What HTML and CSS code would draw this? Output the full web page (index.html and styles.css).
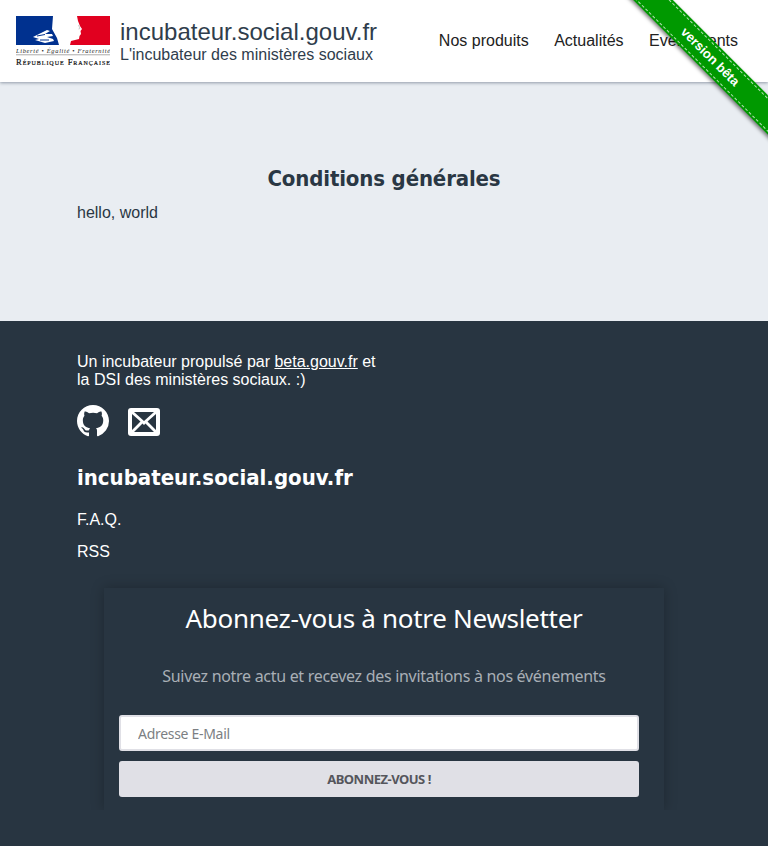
FILE: index.html
```html
<!DOCTYPE html>
<html lang="fr">
<head>
<meta charset="utf-8">
<title>Conditions générales - incubateur.social.gouv.fr</title>
<link rel="stylesheet" href="styles.css">
</head>
<body>
<header class="site-header">
  <a class="brand" href="#">
    <svg class="logo" viewBox="0 0 94 50" width="94" height="50" aria-label="République française">
      <rect x="0" y="0" width="45" height="29" fill="#00318f"/>
      <rect x="52" y="0" width="42" height="29" fill="#e1001f"/>
      <path d="M37 0H61L62 5 64 10 66 13 64.500 15 65 18 63.500 20 63 23 59 24 55 25 54 29H43L41 22 36 13Z" fill="#fff"/>
      <path d="M62.500 9l1.500 3.500-1.500.5" fill="none" stroke="#bdbdbd" stroke-width=".8"/>
      <path d="M17 21l8-4 6-3 3 1-5 3 7 0 1 2-6 1 6 2 1 2-9 2-10-3 4-1Z" fill="#fff"/>
      <path d="M21 20l8-1.500M24 24l9 0" stroke="#00318f" stroke-width="1" fill="none"/>
      <text class="logo-motto" x="47" y="36.500" text-anchor="middle" textLength="94">Liberté • Égalité • Fraternité</text>
      <rect x="0" y="38.500" width="94" height=".7" fill="#888"/>
      <text class="logo-rep" x="47" y="48.500" text-anchor="middle" textLength="94">République Française</text>
    </svg>
    <span class="brand-text">
      <span class="brand-title">incubateur.social.gouv.fr</span>
      <span class="brand-sub">L'incubateur des ministères sociaux</span>
    </span>
  </a>
  <nav class="nav">
    <a href="#">Nos produits</a>
    <a href="#">Actualités</a>
    <a href="#">Evénements</a>
  </nav>
</header>

<div class="ribbon-clip"><div class="ribbon"><span>version bêta</span></div></div>

<main class="main">
  <h1 class="page-title">Conditions générales</h1>
  <p class="page-text">hello, world</p>
</main>

<footer class="footer">
  <div class="footer-inner">
    <p class="footer-about">Un incubateur propulsé par <a href="#">beta.gouv.fr</a> et<br>la DSI des ministères sociaux. :)</p>
    <div class="socials">
      <a href="#" aria-label="GitHub">
        <svg viewBox="0 0 16 16" width="32" height="32"><path fill="#fff" fill-rule="evenodd" d="M8 0C3.58 0 0 3.58 0 8c0 3.54 2.29 6.53 5.47 7.59.4.07.55-.17.55-.38 0-.19-.01-.82-.01-1.49-2.01.37-2.53-.49-2.69-.94-.09-.23-.48-.94-.82-1.13-.28-.15-.68-.52-.01-.53.63-.01 1.08.58 1.23.82.72 1.21 1.87.87 2.33.66.07-.52.28-.87.51-1.07-1.78-.2-3.64-.89-3.64-3.95 0-.87.31-1.59.82-2.15-.08-.2-.36-1.02.08-2.12 0 0 .67-.21 2.2.82.64-.18 1.32-.27 2-.27s1.36.09 2 .27c1.53-1.04 2.2-.82 2.2-.82.44 1.1.16 1.92.08 2.12.51.56.82 1.27.82 2.15 0 3.07-1.87 3.75-3.65 3.95.29.25.54.73.54 1.48 0 1.07-.01 1.93-.01 2.2 0 .21.15.46.55.38A8.01 8.01 0 0 0 16 8c0-4.42-3.58-8-8-8z"/></svg>
      </a>
      <a class="mail-link" href="#" aria-label="E-mail">
        <svg viewBox="0 0 32 28" width="32" height="28"><rect width="32" height="28" rx="3" fill="#fff"/><path d="M6 4h20L16 13ZM4 6v16l8.500-8.500ZM28 6v16l-8.500-8.500ZM6 24h20l-8.500-8.500-1.500 1.500-1.500-1.500Z" fill="#283541"/></svg>
      </a>
    </div>
    <h2 class="footer-title">incubateur.social.gouv.fr</h2>
    <ul class="footer-links">
      <li><a href="#">F.A.Q.</a></li>
      <li><a href="#">RSS</a></li>
    </ul>
  </div>
  <section class="newsletter">
    <h3 class="newsletter-title">Abonnez-vous à notre Newsletter</h3>
    <p class="newsletter-text">Suivez notre actu et recevez des invitations à nos événements</p>
    <form class="newsletter-form">
      <input class="newsletter-input" type="email" placeholder="Adresse E-Mail">
      <button class="newsletter-button" type="button">ABONNEZ-VOUS !</button>
    </form>
  </section>
</footer>
</body>
</html>
```
FILE: styles.css
```css
* { box-sizing: border-box; }
html, body { margin: 0; padding: 0; }
body {
  font-family: "Liberation Sans", Arial, sans-serif;
  font-size: 16px;
  background: #283541;
  color: #2a3744;
  position: relative;
  min-height: 846px;
  overflow-x: hidden;
}
a { color: inherit; text-decoration: none; }

.site-header {
  height: 82px;
  background: #fff;
  display: flex;
  align-items: center;
  justify-content: space-between;
  padding: 0 30px 0 16px;
  box-shadow: 0 1px 3px rgba(60, 75, 95, .5);
  position: relative;
}
.brand { display: flex; align-items: center; gap: 10px; }
.logo { display: block; flex: none; }
.logo-motto { font-family: "Liberation Serif", serif; font-style: italic; font-size: 6.4px; fill: #222; }
.logo-rep { font-family: "Liberation Serif", serif; font-size: 8.6px; font-variant: small-caps; fill: #111; stroke: #111; stroke-width: .2px; }
.brand-text { display: flex; flex-direction: column; color: #2f3d4c; }
.brand-title { font-size: 24px; line-height: 28px; }
.brand-sub { font-size: 16px; line-height: 18px; }
.nav { display: flex; gap: 25.5px; color: #222; }

.ribbon-clip {
  position: absolute;
  top: 0;
  right: 0;
  width: 200px;
  height: 200px;
  overflow: hidden;
  pointer-events: none;
}
.ribbon {
  position: absolute;
  left: 22px;
  top: 43px;
  width: 240px;
  height: 28px;
  transform: rotate(45deg);
  background: #090;
  box-shadow: 0 2px 4px rgba(0, 0, 0, .5);
  padding: 2px 0;
  color: #fff;
  font-size: 13px;
  font-weight: 700;
  text-align: center;
}
.ribbon span {
  display: block;
  height: 24px;
  line-height: 22px;
  border-top: 1px dashed rgba(255, 255, 255, .7);
  border-bottom: 1px dashed rgba(255, 255, 255, .7);
}

.main {
  height: 239px;
  background: #e9edf2;
  padding: 82px 77px 0;
}
.page-title {
  margin: 0;
  font-family: "DejaVu Sans Condensed", "DejaVu Sans", sans-serif;
  font-stretch: condensed;
  font-size: 22px;
  line-height: 30px;
  font-weight: 700;
  letter-spacing: -.15px;
  text-align: center;
  color: #2a3744;
}
.page-text { margin: 10px 0 0; line-height: 18px; }

.footer { color: #fff; padding-top: 32px; height: 525px; }
.footer-inner { padding: 0 77px; }
.footer-about { margin: 0; line-height: 18px; }
.footer-about a { text-decoration: underline; }
.socials { display: flex; align-items: center; gap: 19px; margin-top: 16px; height: 32px; }
.socials a { display: block; line-height: 0; }
.mail-link { margin-top: 2px; }
.footer-title {
  margin: 25px 0 0;
  font-family: "DejaVu Sans Condensed", "DejaVu Sans", sans-serif;
  font-stretch: condensed;
  font-size: 22px;
  line-height: 32px;
  font-weight: 700;
}
.footer-links { list-style: none; margin: 17px 0 0; padding: 0; display: flex; flex-direction: column; gap: 14px; }
.footer-links li { line-height: 18px; }

.newsletter {
  width: 560px;
  height: 222px;
  margin: 27px auto 0;
  padding: 14px 25px 0 15px;
  background: #283541;
  box-shadow: 0 0 12px rgba(0, 0, 0, .25);
  clip-path: inset(-20px -20px 0 -20px);
  font-family: "Noto Sans", sans-serif;
}
.newsletter-title { margin: 0; font-size: 26px; font-weight: 400; line-height: 32px; letter-spacing: -.3px; text-align: center; padding-left: 10px; }
.newsletter-text { margin: 33px 0 0; font-size: 16px; line-height: 18px; letter-spacing: -.3px; text-align: center; color: #a9afb6; padding-left: 10px; }
.newsletter-form { display: flex; flex-direction: column; gap: 10px; margin-top: 30px; }
.newsletter-input {
  display: block;
  width: 520px;
  height: 36px;
  border: 2px solid #e0e0e6;
  border-radius: 3px;
  background: #fff;
  padding: 0 17px;
  font-family: inherit;
  font-size: 14px;
  letter-spacing: -.3px;
}
.newsletter-input::placeholder { color: #7c7f83; opacity: 1; }
.newsletter-button {
  display: block;
  width: 520px;
  height: 36px;
  border: 0;
  border-radius: 3px;
  background: #e0e0e6;
  color: #55565c;
  font-family: inherit;
  font-size: 13px;
  font-weight: 700;
  letter-spacing: -.5px;
}
```
